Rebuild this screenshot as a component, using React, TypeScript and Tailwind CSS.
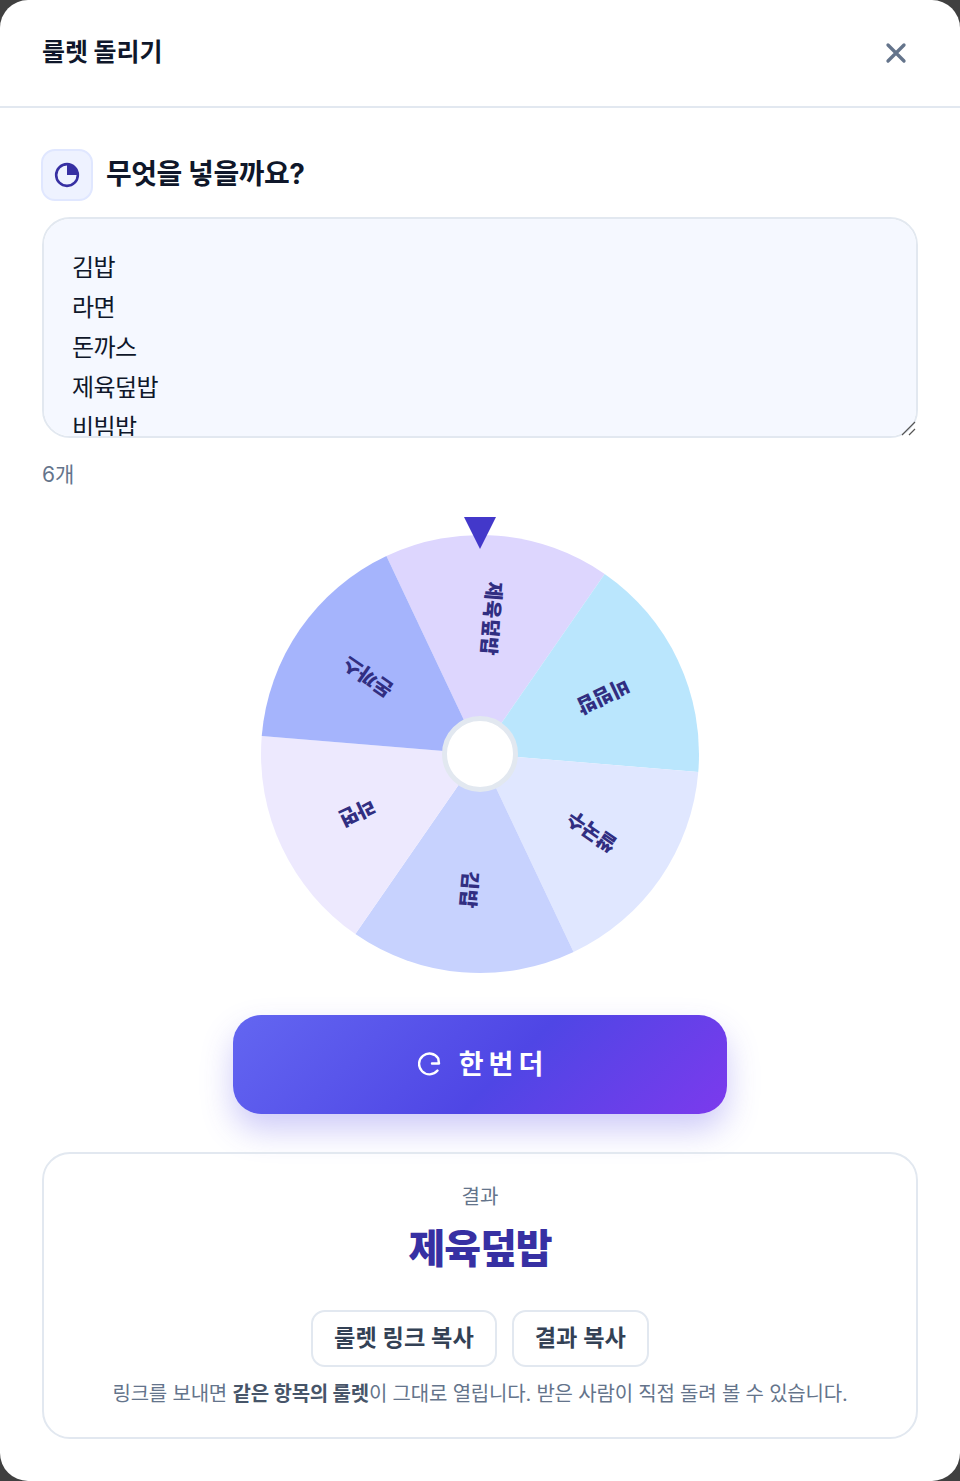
const C = 219;
const OFFSET = -25.3;
const SEGMENTS = [
  { fill: "#ddd6fe", label: "제육덮밥", rot: 94.7 },
  { fill: "#bae6fd", label: "비빔밥", rot: 154.7 },
  { fill: "#e0e7ff", label: "쌀국수", rot: 214.7 },
  { fill: "#c7d2fe", label: "김밥", rot: 94.7 },
  { fill: "#ede9fe", label: "라면", rot: 154.7 },
  { fill: "#a5b4fc", label: "돈까스", rot: 214.7 },
];

function pt(deg: number, r: number) {
  const a = (deg * Math.PI) / 180;
  return [r * Math.sin(a), -r * Math.cos(a)];
}

function Wheel() {
  return (
    <svg viewBox="-220 -220 440 440" className="w-[440px] h-[440px] block">
      {SEGMENTS.map((s, i) => {
        const a0 = OFFSET + i * 60;
        const a1 = a0 + 60;
        const [x0, y0] = pt(a0, C);
        const [x1, y1] = pt(a1, C);
        const [tx, ty] = pt(a0 + 30, 136);
        return (
          <g key={s.label}>
            <path d={`M0 0L${x0} ${y0}A${C} ${C} 0 0 1 ${x1} ${y1}Z`} fill={s.fill} />
            <text
              x={0}
              y={0}
              transform={`translate(${tx} ${ty}) rotate(${s.rot})`}
              textAnchor="middle"
              dominantBaseline="central"
              fill="#312e81"
              fontSize={20}
              fontWeight={800}
            >
              {s.label}
            </text>
          </g>
        );
      })}
    </svg>
  );
}

export default function App() {
  return (
    <div className="w-[960px] h-[1481px] bg-[#404040] font-['Inter','Noto_Sans_CJK_KR',sans-serif]">
      <div className="w-full h-full bg-white rounded-[28px] overflow-hidden flex flex-col">
        <header className="h-[108px] border-b-2 border-[#e2e8f0] flex items-center justify-between pl-[42px] pr-[48px]">
          <h1 className="text-[25px] font-bold text-[#0f172a] tracking-[-0.1px]">룰렛 돌리기</h1>
          <svg viewBox="0 0 24 24" className="w-[32px] h-[32px] text-[#64748b]" fill="none" stroke="currentColor" strokeWidth={2.5} strokeLinecap="round">
            <path d="M18 6 6 18M6 6l12 12" />
          </svg>
        </header>
        <main className="flex-1 px-[42px] pt-[40px] flex flex-col">
          <div className="flex items-center gap-[13px] h-[53px] -ml-px">
            <div className="w-[52px] h-[52px] rounded-[14px] bg-[#eef2ff] border-2 border-[#e0e7ff] flex items-center justify-center">
              <svg viewBox="0 0 24 24" className="w-[26px] h-[26px]">
                <path d="M12 12V2a10 10 0 0 1 10 10Z" fill="#3730a3" />
                <circle cx="12" cy="12" r="10" fill="none" stroke="#3730a3" strokeWidth="2.4" />
              </svg>
            </div>
            <h2 className="text-[28px] font-bold text-[#0f172a] tracking-[-0.45px] -mt-[2px]">무엇을 넣을까요?</h2>
          </div>
          <div className="relative mt-[16px] w-[876px] h-[221px]">
            <textarea
              className="w-full h-full block rounded-[28px] border-2 border-[#e2e8f0] bg-[#f5f8ff] px-[28px] pt-[29px] pb-[27px] text-[24px] leading-[40px] tracking-[-0.6px] text-[#0f172a] resize-none outline-none"
              defaultValue={"김밥\n라면\n돈까스\n제육덮밥\n비빔밥\n쌀국수"}
            />
            <svg viewBox="0 0 16 16" className="absolute right-[1px] bottom-[2px] w-[16px] h-[16px] text-[#555555]" fill="none" stroke="currentColor" strokeWidth={1.2}>
              <path d="M1 15 14 2M8 15l6-6" />
            </svg>
          </div>
          <p className="mt-[22px] text-[21px] leading-[30px] text-[#64748b]">6개</p>
          <div className="relative self-center mt-[27px] w-[440px] h-[458px] pt-[17px]">
            <Wheel />
            <div className="absolute left-1/2 top-0 -translate-x-1/2 w-0 h-0 border-l-[16px] border-r-[16px] border-t-[32px] border-l-transparent border-r-transparent border-t-[#4338ca]" />
            <div className="absolute left-[182px] top-[199px] w-[76px] h-[76px] rounded-full bg-white border-[5px] border-[#e2e8f0]" />
          </div>
          <button className="self-center mt-[40px] w-[494px] h-[99px] pl-[6px] rounded-[28px] bg-[linear-gradient(135deg,#6366f1,#4f46e5_55%,#7c3aed)] shadow-[0_16px_32px_rgba(79,70,229,0.28)] text-white flex items-center justify-center gap-[17px]">
            <svg viewBox="0 0 24 24" className="w-[24px] h-[24px] -mt-[1px]" fill="none" stroke="currentColor" strokeWidth={2.4} strokeLinecap="round" strokeLinejoin="round">
              <path d="M19.5 18.6A10.4 10.4 0 1 1 20.2 6.3L21 11.5H14" />
            </svg>
            <span className="text-[27px] font-bold tracking-[5px] mt-[1px]">한번더</span>
          </button>
          <section className="mt-[38px] w-[876px] h-[287px] rounded-[28px] border-2 border-[#e2e8f0] flex flex-col items-center pt-[29px]">
            <p className="text-[20px] leading-[28px] text-[#64748b]">결과</p>
            <p className="mt-[10px] text-[40px] leading-[56px] font-extrabold text-[#3730a3] tracking-[-1px]">제육덮밥</p>
            <div className="mt-[33px] flex gap-[15px]">
              <button className="h-[57px] px-[21px] rounded-[14px] border-2 border-[#e2e8f0] bg-white text-[23.2px] font-semibold text-[#334155]">룰렛 링크 복사</button>
              <button className="h-[57px] px-[21px] rounded-[14px] border-2 border-[#e2e8f0] bg-white text-[23.2px] font-semibold text-[#334155]">결과 복사</button>
            </div>
            <p className="mt-[11px] text-[20px] leading-[32px] text-[#64748b] tracking-[-0.2px]">
              링크를 보내면 <strong className="font-bold text-[#475569]">같은 항목의 룰렛</strong>이 그대로 열립니다. 받은 사람이 직접 돌려 볼 수 있습니다.
            </p>
          </section>
        </main>
      </div>
    </div>
  );
}
